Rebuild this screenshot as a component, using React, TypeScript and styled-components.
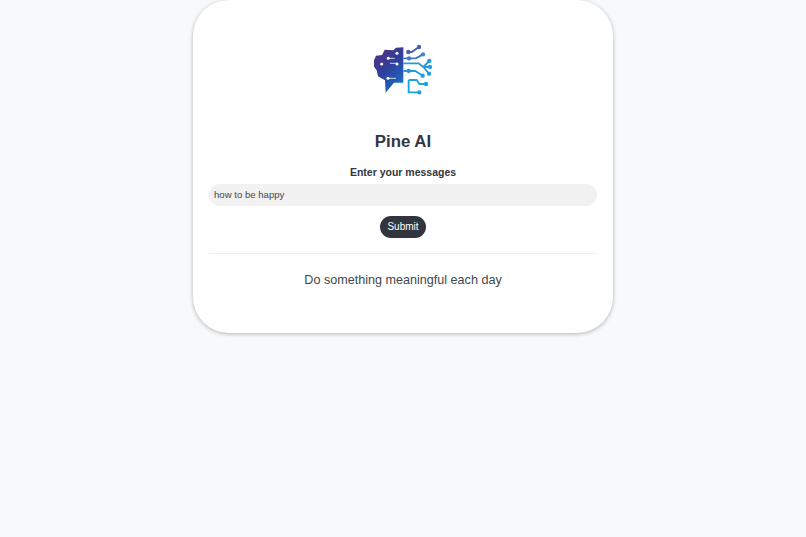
import React from "react";
import styled, { createGlobalStyle } from "styled-components";

const Global = createGlobalStyle`
  html, body { margin: 0; padding: 0; background: #f8f9fb; }
  body { font-family: "Liberation Sans", Arial, sans-serif; color: #3a3d45; }
`;

const Page = styled.main`
  min-height: 537px;
  display: flex;
  flex-direction: column;
  align-items: center;
`;

const Card = styled.section`
  box-sizing: border-box;
  width: 420px;
  height: 333px;
  padding: 35px 16px 0;
  background: #ffffff;
  border-radius: 36px;
  box-shadow: 0 1px 4px rgba(0, 0, 0, 0.28);
  display: flex;
  flex-direction: column;
  align-items: center;
`;

const Logo = styled.svg`
  display: block;
  width: 85px;
  height: 70px;
  flex: none;
`;

const Title = styled.h1`
  margin: 27px 0 0;
  font-size: 16.8px;
  line-height: 20px;
  font-weight: 700;
  color: #33363e;
`;

const Form = styled.form`
  width: 100%;
  margin-top: 12px;
  display: flex;
  flex-direction: column;
  align-items: center;
`;

const Label = styled.label`
  font-size: 10.5px;
  line-height: 16px;
  font-weight: 700;
  color: #33363e;
`;

const Input = styled.input`
  box-sizing: border-box;
  width: 388px;
  height: 22px;
  margin-top: 4px;
  padding: 0 5px 1px;
  border: 0;
  border-radius: 11px;
  background: #f1f1f1;
  font: 9.6px "Liberation Sans", Arial, sans-serif;
  color: #44464c;
  outline: none;
`;

const Button = styled.button`
  width: 46px;
  height: 22px;
  margin-top: 10px;
  padding: 0 0 1px;
  border: 0;
  border-radius: 11px;
  background: #31353d;
  color: #ffffff;
  font: 10px "Liberation Sans", Arial, sans-serif;
`;

const Divider = styled.hr`
  width: 388px;
  height: 1px;
  margin: 15px 0 0;
  border: 0;
  background: #f0f0f0;
`;

const Answer = styled.p`
  margin: 17px 0 0;
  font-size: 12.6px;
  line-height: 18px;
  color: #44464c;
`;

const wires = [
  { d: "M145 51H155L177 36", c: "#4a5fae" },
  { d: "M130 70H168L189 58", c: "#3f78bf" },
  { d: "M130 85H176L190 96H210M190 96L208 78M190 96L207 116", c: "#2b97d8" },
  { d: "M130 108H166L188 122", c: "#1f9fdf" },
  { d: "M146 135H170L178 147H198", c: "#15a5e5" },
  { d: "M146 135V172H178", c: "#15a5e5" },
];

const nodes: [number, number, string][] = [
  [145, 51, "#4a5fae"], [177, 36, "#4a5fae"], [147, 70, "#3f78bf"], [189, 58, "#3f88c8"],
  [208, 78, "#1f9fdf"], [210, 96, "#1f9fdf"], [207, 116, "#1f9fdf"], [188, 122, "#22a0e0"],
  [146, 108, "#2f8fd0"], [198, 147, "#15a5e5"], [178, 172, "#15a5e5"],
];

const dots: [number, number][] = [
  [111, 55], [85, 70], [65, 87], [111, 87], [84, 130],
];

const BrainLogo = () => (
  <Logo viewBox="0 0 85 70" aria-label="Pine AI logo">
    <defs>
      <linearGradient id="brain" x1="0.1" y1="0" x2="0.7" y2="1">
        <stop offset="0" stopColor="#5a2f7c" />
        <stop offset="0.5" stopColor="#2f3f9c" />
        <stop offset="0.85" stopColor="#2060b8" />
        <stop offset="1" stopColor="#1687d4" />
      </linearGradient>
    </defs>
    <g transform="translate(-1 0) scale(0.3333)">
      <path
        d="M130 37L108 38L100 46L74 44L66 60L48 62L42 76V95L50 106L54 124L75 136L77 173L102 143H130Z"
        fill="url(#brain)"
      />
      <path d="M85 70H104M90 85H111M84 130H108" stroke="#ffffff" strokeWidth="2.6" fill="none" opacity="0.9" />
      {dots.map(([x, y]) => (
        <circle key={`${x}-${y}`} cx={x} cy={y} r="4.5" fill="#ffffff" />
      ))}
      {wires.map(({ d, c }) => (
        <path key={d} d={d} fill="none" stroke={c} strokeWidth="5.5" />
      ))}
      {nodes.map(([x, y, c]) => (
        <circle key={`${x}-${y}`} cx={x} cy={y} r="6.5" fill={c} />
      ))}
    </g>
  </Logo>
);

export default function App() {
  return (
    <Page>
      <Global />
      <Card>
        <BrainLogo />
        <Title>Pine AI</Title>
        <Form onSubmit={(e) => e.preventDefault()}>
          <Label htmlFor="msg">Enter your messages</Label>
          <Input id="msg" defaultValue="how to be happy" />
          <Button type="submit">Submit</Button>
        </Form>
        <Divider />
        <Answer>Do something meaningful each day</Answer>
      </Card>
    </Page>
  );
}
